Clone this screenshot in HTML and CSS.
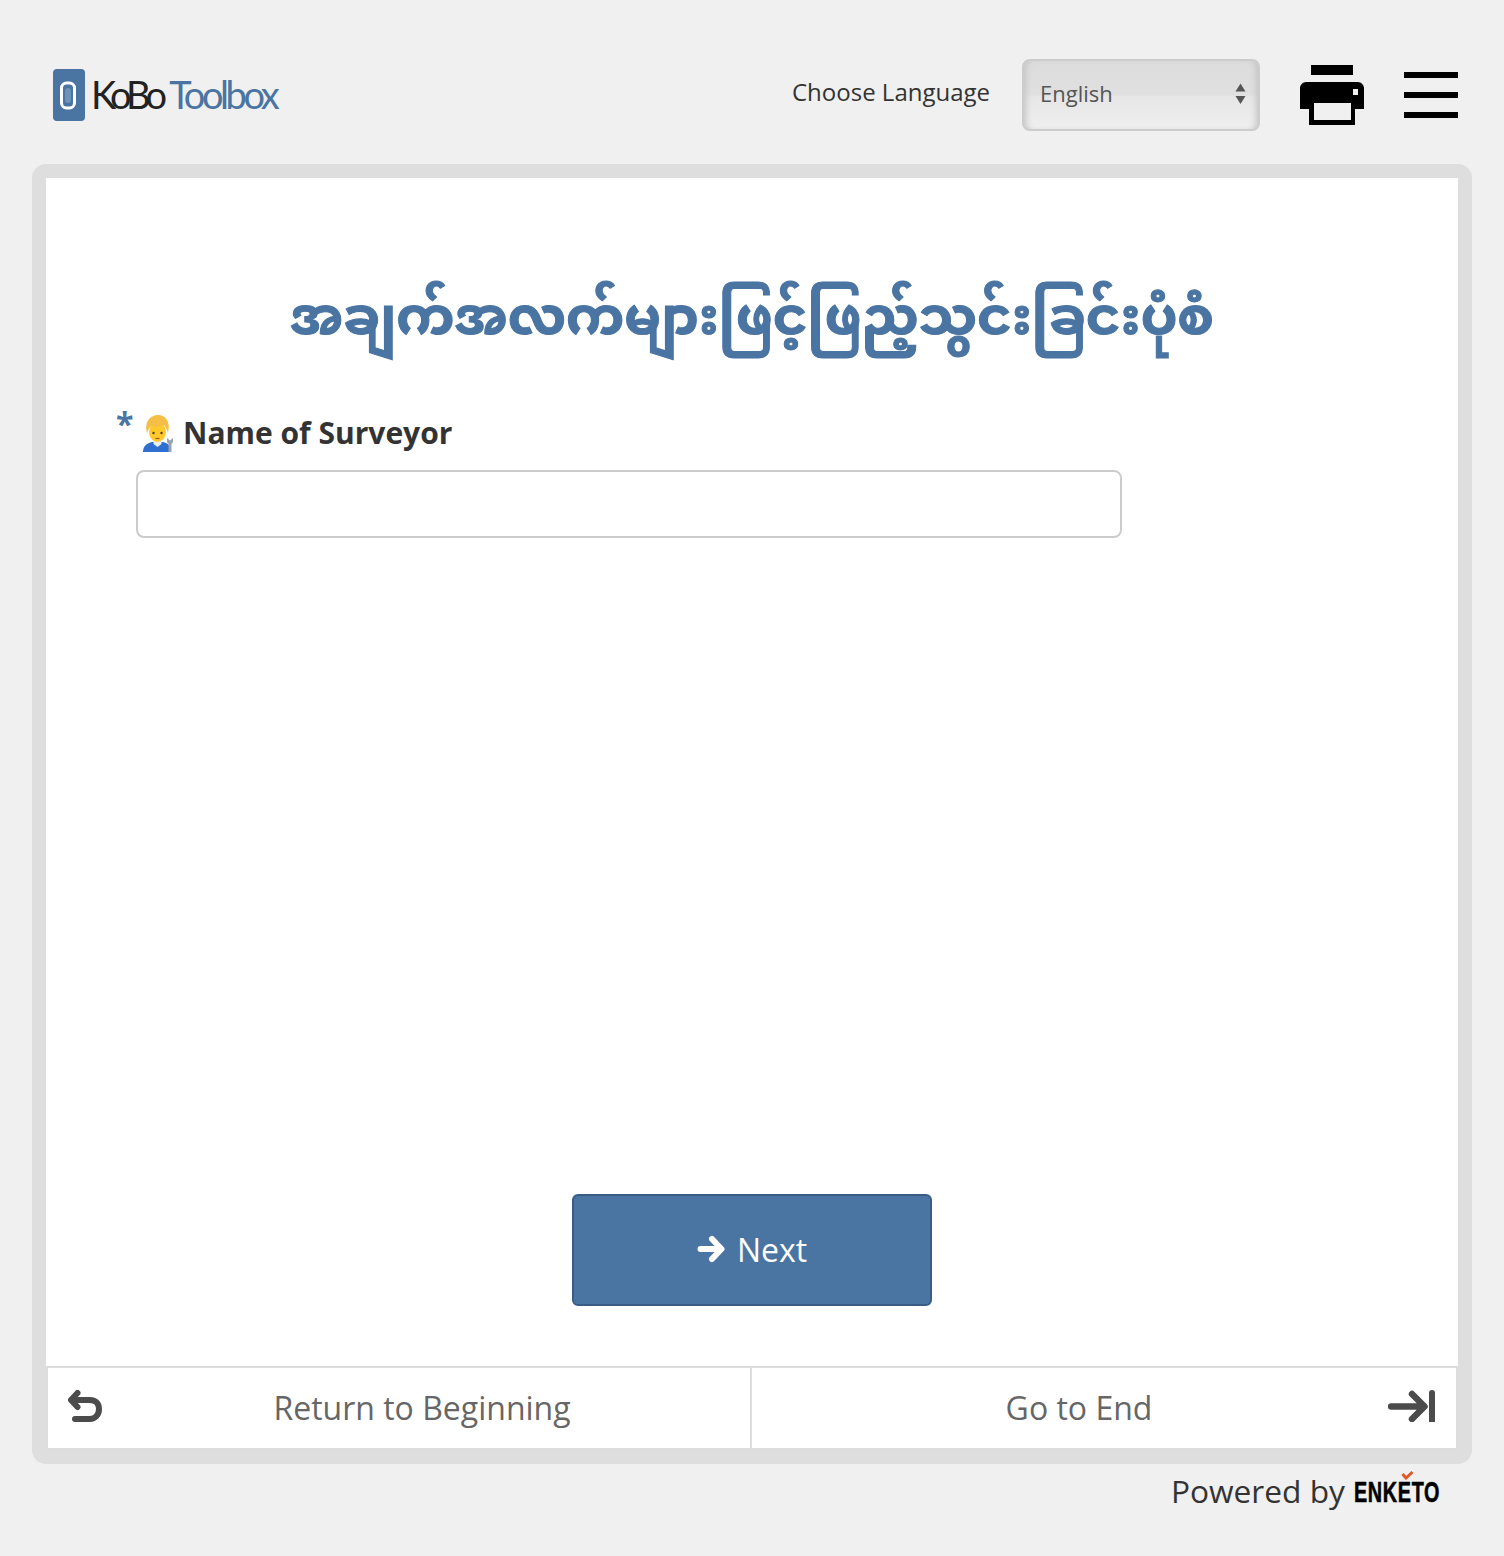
FILE: index.html
```html
<!DOCTYPE html>
<html lang="en">
<head>
<meta charset="utf-8">
<title>Form</title>
<link rel="stylesheet" href="styles.css">
</head>
<body>
<header class="topbar">
  <a class="logo">
    <svg class="logo-mark" width="34" height="54" viewBox="0 0 34 54"><rect x="1" y="1" width="32" height="52" rx="4" fill="#4a74a2"/><rect x="9.500" y="15" width="13" height="25" rx="5" fill="none" stroke="#fff" stroke-width="3"/><rect x="13" y="20" width="6" height="15" rx="3" fill="#6f92b8"/></svg>
    <span class="logo-text"><span class="logo-kobo">KoBo</span><span class="logo-tool">Toolbox</span></span>
  </a>
  <div class="topbar-right">
    <span class="lang-label">Choose Language</span>
    <div class="lang-select">
      <span>English</span>
      <svg class="lang-caret" width="11" height="22" viewBox="0 0 11 22"><path d="M5.500 0.500L10.500 8.500H0.500Z" fill="#555"/><path d="M5.500 21L0.500 13H10.500Z" fill="#555"/></svg>
    </div>
    <svg class="print-icon" width="64" height="60" viewBox="0 0 64 60"><path d="M11 0H53V10H11Z"/><path d="M6 17H58C61 17 64 20 64 23V44H55V60H9V44H0V23C0 20 3 17 6 17Z"/><path d="M14 38H51V55H14Z" fill="#f0f0f0"/><path d="M53 24H58V30H53Z" fill="#f0f0f0"/></svg>
    <div class="burger"><i></i><i></i><i></i></div>
  </div>
</header>
<main class="frame">
  <h1 class="title">အချက်အလက်များဖြင့်ဖြည့်သွင်းခြင်းပုံစံ</h1>
  <section class="question">
    <div class="q-label">
      <span class="req">*</span>
      <svg class="emoji" width="32" height="37" viewBox="0 0 32 37">
        <path d="M1 37C1 31 5 28 10 27H21C26 28 29 31 29 37Z" fill="#2f6fd0"/>
        <path d="M11.500 25H19.500V29L15.500 32L11.500 29Z" fill="#e9eef5"/>
        <ellipse cx="15.500" cy="17" rx="8.500" ry="10" fill="#ffc92e"/>
        <path d="M5 18C2 6 9 0 16 0C23 0 29 6 26 18C25 15 24 12 22 10C18 12 12 12 9 11C7 13 6 15 5 18Z" fill="#f5bf47"/>
        <circle cx="11.500" cy="18" r="1.200" fill="#5a3a1a"/><circle cx="19.500" cy="18" r="1.200" fill="#5a3a1a"/>
        <path d="M13.500 23.500H17.500" stroke="#a8541f" stroke-width="1.200"/>
        <path d="M26.500 37V29L25 27V23L28 25.500L31 23V27L29.500 29V37Z" fill="#9aa3ad"/>
      </svg>
      <span class="q-text">Name of Surveyor</span>
    </div>
    <input class="q-input" type="text" aria-label="Name of Surveyor">
  </section>
  <div class="spacer"></div>
  <div class="next-row">
    <button class="next-btn" type="button">
      <svg width="28" height="28" viewBox="0 0 28 28"><path d="M3.500 14H22M15 4L24.500 14L15 24" fill="none" stroke="#fff" stroke-width="6" stroke-linecap="round" stroke-linejoin="round"/></svg>
      <span>Next</span>
    </button>
  </div>
  <nav class="bottom-nav">
    <a class="nav-item nav-first">
      <svg class="nav-icon" width="34" height="32" viewBox="0 0 34 32"><path d="M9.500 3L3 10L9.500 17M5 10H22C28 10 31 14 31 19C31 25 27 29 22 29H7" fill="none" stroke="#4b4b4b" stroke-width="6" stroke-linecap="round" stroke-linejoin="round"/></svg>
      <span>Return to Beginning</span>
    </a>
    <a class="nav-item nav-last">
      <span>Go to End</span>
      <svg class="nav-icon" width="47" height="32" viewBox="0 0 47 32"><path d="M3 16.500H35M24 4L36.500 16.500L24 29" fill="none" stroke="#4b4b4b" stroke-width="6.500" stroke-linecap="round" stroke-linejoin="round"/><path d="M41 3C41 1 42 0 44 0C46 0 47 1 47 3V32H41Z" fill="#4b4b4b"/></svg>
    </a>
  </nav>
</main>
<footer class="powered">
  <span class="powered-text">Powered by</span>
  <span class="enketo-wrap"><span class="enketo">ENKETO</span><svg class="enketo-check" width="13" height="10" viewBox="0 0 13 10"><path d="M1.500 4L5 8L11.500 2" fill="none" stroke="#e0592a" stroke-width="3"/></svg></span>
</footer>
</body>
</html>
```

FILE: styles.css
```css
* { box-sizing: border-box; }
html, body { margin: 0; padding: 0; }
body {
  width: 1504px;
  height: 1556px;
  background: #f0f0f0;
  font-family: "Open Sans", "Noto Sans", sans-serif;
  color: #333;
  overflow: hidden;
}
.topbar {
  height: 164px;
  padding: 67px 46px 0 52px;
  display: flex;
  align-items: flex-start;
  justify-content: space-between;
}
.logo { display: flex; align-items: center; gap: 5px; height: 54px; }
.logo-mark { display: block; margin-top: 1px; }
.logo-text { font-family: "Lato", sans-serif; font-size: 38px; line-height: 54px; white-space: nowrap; }
.logo-kobo { color: #222; font-weight: 400; letter-spacing: -4.800px; margin-right: 7px; }
.logo-tool { color: #4a74a2; font-weight: 400; letter-spacing: -3.400px; }
.topbar-right { display: flex; align-items: flex-start; margin-top: -8px; }
.lang-label { font-size: 24px; line-height: 32px; margin-top: 17px; width: 198px; margin-right: 32px; color: #333; white-space: nowrap; }
.lang-select {
  width: 238px;
  height: 72px;
  border: 2px solid #ccc;
  border-radius: 8px;
  padding: 0 12px 4px 16px;
  display: flex;
  align-items: center;
  justify-content: space-between;
  font-size: 22px;
  color: #555;
  background: linear-gradient(#dcdcdc 0%, #e0e0e0 50%, #e6e6e6 52%, #efefef 100%);
  box-shadow: inset 6px 0 6px -4px #c4c4c4, inset -6px 0 6px -4px #c4c4c4;
}
.lang-caret { display: block; margin-top: 2px; }
.print-icon { margin: 6px 40px 0 40px; display: block; }
.burger { width: 54px; height: 46px; margin-top: 13px; display: flex; flex-direction: column; justify-content: space-between; }
.burger i { display: block; height: 6px; background: #000; }
.frame {
  width: 1440px;
  height: 1300px;
  margin-left: 32px;
  border: 14px solid #dedede;
  border-radius: 14px;
  background: #fff;
  display: flex;
  flex-direction: column;
}
.title {
  margin: 92px 0 0;
  font-family: "Noto Sans Myanmar", "Padauk", "Noto Sans", sans-serif;
  font-size: 52.500px;
  line-height: 104px;
  height: 104px;
  font-weight: 700;
  text-align: center;
  color: #4a74a2;
  white-space: nowrap;
  -webkit-text-stroke: 1.100px #4a74a2;
}
.question { margin: 23px 0 0 90px; width: 986px; }
.q-label { display: flex; align-items: flex-end; height: 56px; margin-left: -20px; }
.req { font-size: 32px; font-weight: 700; color: #4a74a2; align-self: flex-start; line-height: 44px; width: 26px; margin-top: 5px; }
.emoji { display: block; margin: 0 9px 1px 0; }
.q-text { font-size: 30px; line-height: 40px; font-weight: 700; color: #333; }
.q-input {
  display: block;
  width: 986px;
  height: 68px;
  margin-top: 17px;
  border: 2px solid #ccc;
  border-radius: 8px;
  background: #fff;
}
.spacer { flex: 1; }
.next-row { display: flex; justify-content: center; padding-bottom: 60px; }
.next-btn {
  width: 360px;
  height: 112px;
  padding: 0 0 2px;
  background: #4a74a2;
  border: 2px solid #3a5d84;
  border-radius: 6px;
  color: #fff;
  font-family: inherit;
  font-size: 32px;
  display: flex;
  align-items: center;
  justify-content: center;
  gap: 12px;
}
.bottom-nav {
  height: 84px;
  border: 2px solid #ddd;
  display: flex;
  font-size: 32px;
  color: #666;
}
.nav-item { flex: 0 0 50%; position: relative; display: flex; align-items: center; justify-content: center; padding-bottom: 2px; }
.nav-first { border-right: 2px solid #ddd; padding-left: 46px; }
.nav-last { padding-right: 50px; }
.nav-icon { position: absolute; top: 22px; }
.nav-first .nav-icon { left: 20px; }
.nav-last .nav-icon { right: 21px; }
.powered {
  display: flex;
  justify-content: flex-end;
  align-items: center;
  gap: 9px;
  padding: 5px 64px 0 0;
  font-size: 31.700px;
  line-height: 44px;
  color: #333;
}
.powered-text { margin-bottom: 2px; }
.enketo-wrap { position: relative; display: block; width: 86px; height: 44px; }
.enketo {
  display: block;
  width: 130px;
  font-family: "Liberation Sans", sans-serif;
  font-weight: 700;
  font-size: 30px;
  letter-spacing: 1px;
  color: #000;
  white-space: nowrap;
  transform: scaleX(0.66);
  transform-origin: left center;
  -webkit-text-stroke: 0.6px #000;
}
.enketo-check { position: absolute; left: 47px; top: 0; }
```
